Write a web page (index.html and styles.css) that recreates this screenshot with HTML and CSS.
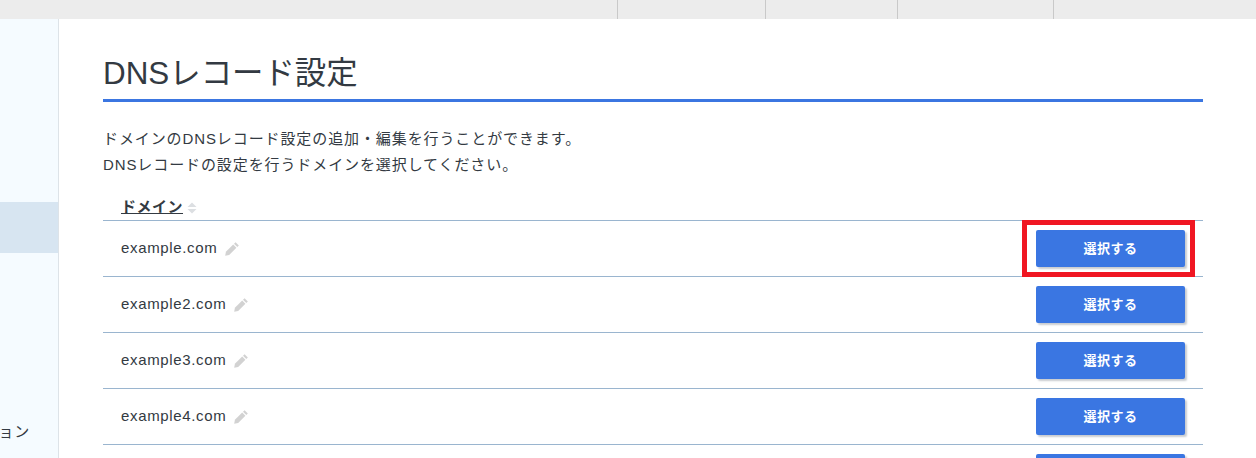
FILE: index.html
```html
<!DOCTYPE html>
<html lang="ja">
<head>
<meta charset="utf-8">
<title>DNSレコード設定</title>
<link rel="stylesheet" href="styles.css">
</head>
<body>
<div class="topbar">
  <div class="top-cell top-wide"></div>
  <div class="top-cell top-a"></div>
  <div class="top-cell top-b"></div>
  <div class="top-cell top-c"></div>
  <div class="top-cell top-d"></div>
</div>
<div class="shell">
  <aside class="sidebar">
    <div class="side-active"></div>
    <div class="side-label">ション</div>
  </aside>
  <main class="main">
    <h1 class="title">DNSレコード設定</h1>
    <p class="intro">ドメインのDNSレコード設定の追加・編集を行うことができます。<br>DNSレコードの設定を行うドメインを選択してください。</p>
    <div class="table">
      <div class="thead"><a class="th-link">ドメイン</a><svg class="sort" viewBox="0 0 10 12" width="10" height="12"><path d="M5 0.5 9.5 5H0.5Z"/><path d="M5 11.5 9.5 7H0.5Z"/></svg></div>
      <div class="row">
        <span class="domain">example.com</span>
        <svg class="pencil" viewBox="0 0 14 14" width="14" height="14"><path d="M10.6 0.2 13.8 3.4 12.3 5 9 1.8Z"/><path d="M8.2 2.6 11.4 5.8 4.2 13 0.2 13.8 0.9 9.8Z"/></svg>
        <button class="select">選択する</button>
        <div class="highlight"></div>
      </div>
      <div class="row">
        <span class="domain">example2.com</span>
        <svg class="pencil" viewBox="0 0 14 14" width="14" height="14"><path d="M10.6 0.2 13.8 3.4 12.3 5 9 1.8Z"/><path d="M8.2 2.6 11.4 5.8 4.2 13 0.2 13.8 0.9 9.8Z"/></svg>
        <button class="select">選択する</button>
      </div>
      <div class="row">
        <span class="domain">example3.com</span>
        <svg class="pencil" viewBox="0 0 14 14" width="14" height="14"><path d="M10.6 0.2 13.8 3.4 12.3 5 9 1.8Z"/><path d="M8.2 2.6 11.4 5.8 4.2 13 0.2 13.8 0.9 9.8Z"/></svg>
        <button class="select">選択する</button>
      </div>
      <div class="row">
        <span class="domain">example4.com</span>
        <svg class="pencil" viewBox="0 0 14 14" width="14" height="14"><path d="M10.6 0.2 13.8 3.4 12.3 5 9 1.8Z"/><path d="M8.2 2.6 11.4 5.8 4.2 13 0.2 13.8 0.9 9.8Z"/></svg>
        <button class="select">選択する</button>
      </div>
      <div class="row">
        <span class="domain"></span>
        <button class="select">選択する</button>
      </div>
    </div>
  </main>
</div>
</body>
</html>
```
FILE: styles.css
```css
* { box-sizing: border-box; }
html, body { margin: 0; padding: 0; height: 100%; overflow: hidden; background: #fff; }
body {
  font-family: "Liberation Sans", "Noto Sans CJK JP", sans-serif;
  color: #333a42;
}
.topbar { display: flex; height: 19px; background: #ececec; }
.top-cell { border-left: 1px solid #c9c9c9; }
.top-wide { width: 617px; border-left: 0; }
.top-a { width: 148px; }
.top-b { width: 132px; }
.top-c { width: 156px; }
.top-d { flex: 1; }
.shell { display: flex; height: 439px; }
.sidebar {
  position: relative;
  width: 59px;
  flex: none;
  background: #f5fbff;
  border-right: 1px solid #dde3e8;
  overflow: hidden;
  padding-top: 183px;
}
.side-active { height: 51px; background: #d7e5f1; }
.side-label {
  position: absolute;
  right: 28px;
  top: 403px;
  font-size: 15px;
  letter-spacing: 0.8px;
  line-height: 20px;
  white-space: nowrap;
}
.main { flex: 1; padding: 0 53px 0 44px; min-width: 0; }
.title {
  margin: 35px 0 0;
  height: 48px;
  font-size: 31.4px;
  font-weight: 400;
  line-height: 39px;
  border-bottom: 3px solid #3b76e1;
}
.intro {
  margin: 24px 0 0;
  font-size: 15px;
  line-height: 26px;
  letter-spacing: 0.9px;
}
.table { margin-top: 16px; }
.thead {
  display: flex;
  align-items: center;
  height: 27px;
  padding-left: 18px;
  border-bottom: 1px solid #9ab5cf;
}
.th-link {
  font-size: 15px;
  font-weight: 700;
  letter-spacing: 0.5px;
  line-height: 18px;
  text-decoration: underline;
}
.sort { margin-left: 4px; margin-top: 2px; fill: #dcdfe2; }
.row {
  position: relative;
  display: flex;
  align-items: center;
  height: 56px;
  padding: 0 18px;
  border-bottom: 1px solid #9ab5cf;
}
.domain { font-size: 15px; letter-spacing: 0.65px; padding-bottom: 2px; }
.pencil { margin-left: 8px; fill: #d2d2d2; }
.select {
  width: 149px;
  height: 37px;
  margin-left: auto;
  padding: 0 0 2px;
  border: 0;
  border-radius: 2px;
  background: #3a76e2;
  color: #fff;
  font-family: inherit;
  font-size: 13px;
  font-weight: 700;
  letter-spacing: 0.5px;
  box-shadow: 2px 2px 2px #c9ccd0;
}
.highlight {
  position: absolute;
  right: 8px;
  top: -1px;
  width: 173px;
  height: 57px;
  border: 5px solid #f01622;
}
```
